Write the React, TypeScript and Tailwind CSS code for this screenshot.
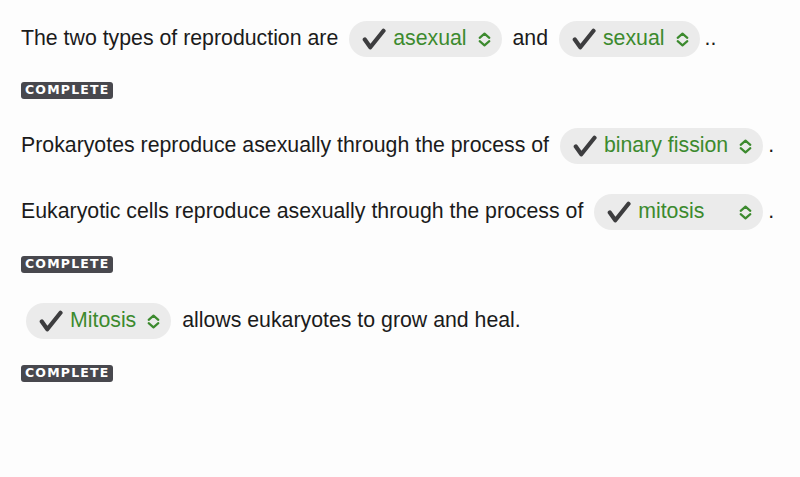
import React from "react"

const GREEN = "text-[#3c8a2e]"

function Check() {
  return (
    <svg width="24" height="22" viewBox="0 0 24 22" className="shrink-0">
      <path
        d="M2.8 11.5 L8.3 19.3 L21.5 2.8"
        fill="none"
        stroke="#3d3d3f"
        strokeWidth="4.2"
        strokeLinecap="round"
        strokeLinejoin="round"
      />
    </svg>
  )
}

function Chevrons() {
  return (
    <svg width="15" height="15" viewBox="0 0 14 14" className="shrink-0">
      <path
        d="M2.5 5.5 L7 1.5 L11.5 5.5 M2.5 8.5 L7 12.5 L11.5 8.5"
        fill="none"
        stroke="#3c8a2e"
        strokeWidth="2"
        strokeLinecap="round"
        strokeLinejoin="round"
      />
    </svg>
  )
}

function Pill({ label, wide }: { label: string; wide?: boolean }) {
  return (
    <span
      className={`mx-[5px] inline-flex h-9 shrink-0 items-center rounded-full bg-[#ebebeb] pl-[13px] pr-[10px] ${
        wide ? "w-[169px]" : ""
      }`}
    >
      <Check />
      <span className={`ml-[7px] ${GREEN}`}>{label}</span>
      <span className={wide ? "ml-auto" : "ml-[10px]"}>
        <Chevrons />
      </span>
    </span>
  )
}

function Badge() {
  return (
    <div className="flex">
      <span className="flex h-[17px] items-center rounded-[3px] bg-[#48484e] pl-[4px] pr-[3px] font-['DejaVu_Sans',sans-serif] text-[12.5px] font-bold leading-none tracking-[1.2px] text-white">
        COMPLETE
      </span>
    </div>
  )
}

export default function App() {
  return (
    <div className="h-[477px] w-[800px] bg-[#fdfdfd] pl-[21px] pt-[21px] font-['Liberation_Sans',Arial,sans-serif] text-[21.3px] text-[#1b1b1b]">
      {/* question 1 */}
      <div className="flex h-9 items-center whitespace-pre">
        <span>The two types of reproduction are </span>
        <Pill label="asexual" />
        <span> and </span>
        <Pill label="sexual" />
        <span>..</span>
      </div>
      <div className="mt-[25px]">
        <Badge />
      </div>

      {/* question 2 */}
      <div className="mt-[29px] flex h-9 items-center whitespace-pre">
        <span>Prokaryotes reproduce asexually through the process of </span>
        <Pill label="binary fission" />
        <span>.</span>
      </div>
      <div className="mt-[30px] flex h-9 items-center whitespace-pre">
        <span>Eukaryotic cells reproduce asexually through the process of </span>
        <Pill label="mitosis" wide />
        <span>.</span>
      </div>
      <div className="mt-[26px]">
        <Badge />
      </div>

      {/* question 3 */}
      <div className="mt-[30px] flex h-9 items-center whitespace-pre">
        <Pill label="Mitosis" />
        <span> allows eukaryotes to grow and heal.</span>
      </div>
      <div className="mt-[26px]">
        <Badge />
      </div>
    </div>
  )
}
